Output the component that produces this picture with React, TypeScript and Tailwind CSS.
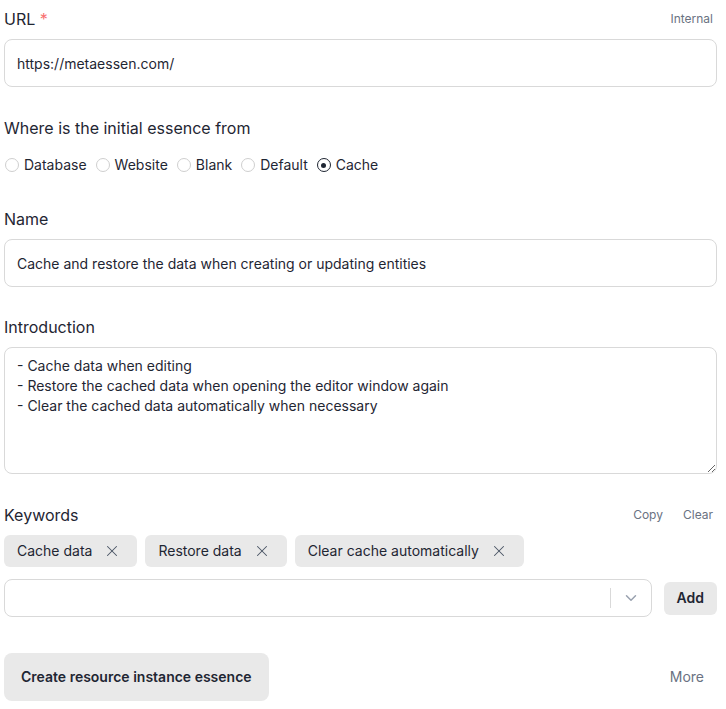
import React from 'react';
import { X, ChevronDown } from 'lucide-react';

const radios = ['Database', 'Website', 'Blank', 'Default', 'Cache'];
const keywords = ['Cache data', 'Restore data', 'Clear cache automatically'];

const intro = `- Cache data when editing
- Restore the cached data when opening the editor window again
- Clear the cached data automatically when necessary`;

export default function App() {
  return (
    <div
      className="min-h-screen bg-white text-[#1f2633] pl-[4px] pr-[9px]"
      style={{ fontFamily: 'Inter, "Noto Sans", sans-serif' }}
    >
      {/* URL */}
      <div className="pt-[7px] flex items-center justify-between">
        <label className="text-base leading-6">
          URL <span className="text-[#f87171]">*</span>
        </label>
        <span className="text-xs text-gray-500 pr-1">Internal</span>
      </div>
      <input
        readOnly
        value="https://metaessen.com/"
        className="mt-2 w-full h-[48px] px-3 text-sm border border-[#d9d9d9] rounded-lg outline-none"
      />

      {/* Source */}
      <div className="mt-[29px] text-base leading-6">Where is the initial essence from</div>
      <div className="mt-[15px] flex items-center gap-2 text-sm leading-5">
        {radios.map((r) => (
          <label key={r} className="flex items-center gap-[5px]">
            <span
              className={`w-[14px] h-[14px] rounded-full border flex items-center justify-center ml-[1px] ${
                r === 'Cache' ? 'border-[#1f2633]' : 'border-[#cfcfcf]'
              }`}
            >
              {r === 'Cache' && <span className="w-[5px] h-[5px] rounded-full bg-[#1f2633]" />}
            </span>
            <span>{r}</span>
          </label>
        ))}
      </div>

      {/* Name */}
      <div className="mt-[32px] text-base leading-6">Name</div>
      <input
        readOnly
        value="Cache and restore the data when creating or updating entities"
        className="mt-2 w-full h-[48px] px-3 text-sm border border-[#d9d9d9] rounded-lg outline-none"
      />

      {/* Introduction */}
      <div className="mt-[28px] text-base leading-6">Introduction</div>
      <textarea
        readOnly
        defaultValue={intro}
        className="mt-2 block w-full h-[127px] px-3 pt-2 text-sm leading-5 border border-[#d9d9d9] rounded-lg outline-none"
      />

      {/* Keywords */}
      <div className="mt-[29px] flex items-center justify-between">
        <span className="text-base leading-6">Keywords</span>
        <div className="flex gap-5 text-xs text-gray-500 pr-1">
          <span>Copy</span>
          <span>Clear</span>
        </div>
      </div>
      <div className="mt-2 flex gap-2">
        {keywords.map((k) => (
          <div key={k} className="h-8 flex items-center pl-[13px] pr-[13px] rounded-md bg-[#e9e9e9] text-sm">
            <span>{k}</span>
            <span className="ml-2 w-6 h-6 flex items-center justify-center text-gray-600">
              <X size={18} strokeWidth={1.4} />
            </span>
          </div>
        ))}
      </div>
      <div className="mt-3 flex items-center gap-3">
        <div className="flex-1 h-[38px] border border-[#d9d9d9] rounded-lg flex items-center">
          <div className="flex-1" />
          <span className="w-px h-5 bg-[#d9d9d9]" />
          <span className="w-[40px] flex items-center justify-center text-gray-400">
            <ChevronDown size={18} strokeWidth={2} />
          </span>
        </div>
        <button className="h-[33px] px-[13px] rounded-md bg-[#e9e9e9] text-sm font-semibold">Add</button>
      </div>

      {/* Footer */}
      <div className="mt-9 flex items-center justify-between">
        <button className="h-12 px-[17px] rounded-lg bg-[#e9e9e9] text-sm font-semibold">
          Create resource instance essence
        </button>
        <span className="text-sm text-gray-500 pr-[13px]">More</span>
      </div>
    </div>
  );
}
